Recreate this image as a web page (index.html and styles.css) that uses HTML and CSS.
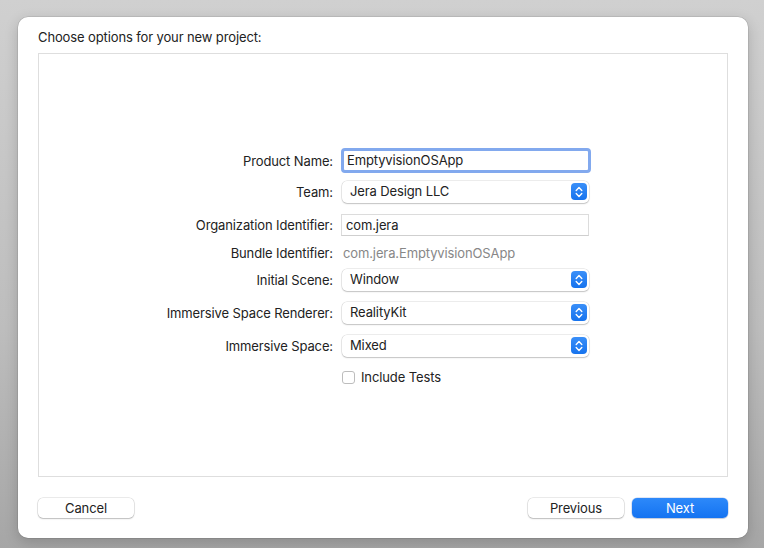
FILE: index.html
```html
<!DOCTYPE html>
<html lang="en">
<head>
    <meta charset="UTF-8">
    <title>New Project</title>
    <link rel="stylesheet" href="styles.css">
</head>
<body>

    <!-- Okno dialogu -->
    <div class="sheet">
        <div class="sheet-title">Choose options for your new project:</div>

        <div class="panel">
            <div class="form">
                <div class="row row-first">
                    <label class="label">Product Name:</label>
                    <div class="field field-focus">EmptyvisionOSApp</div>
                </div>
                <div class="row row-team">
                    <label class="label">Team:</label>
                    <div class="popup-btn">Jera Design LLC<span class="stepper"><svg width="8" height="12" viewBox="0 0 8 12"><path d="M1.2 4.4 L4 1.6 L6.8 4.4 M1.2 7.6 L4 10.4 L6.8 7.6" fill="none" stroke="#fff" stroke-width="1.4" stroke-linecap="round" stroke-linejoin="round"/></svg></span></div>
                </div>
                <div class="row">
                    <label class="label">Organization Identifier:</label>
                    <div class="field">com.jera</div>
                </div>
                <div class="row row-bundle">
                    <label class="label">Bundle Identifier:</label>
                    <div class="value">com.jera.EmptyvisionOSApp</div>
                </div>
                <div class="row row-scene">
                    <label class="label">Initial Scene:</label>
                    <div class="popup-btn">Window<span class="stepper"><svg width="8" height="12" viewBox="0 0 8 12"><path d="M1.2 4.4 L4 1.6 L6.8 4.4 M1.2 7.6 L4 10.4 L6.8 7.6" fill="none" stroke="#fff" stroke-width="1.4" stroke-linecap="round" stroke-linejoin="round"/></svg></span></div>
                </div>
                <div class="row">
                    <label class="label">Immersive Space Renderer:</label>
                    <div class="popup-btn">RealityKit<span class="stepper"><svg width="8" height="12" viewBox="0 0 8 12"><path d="M1.2 4.4 L4 1.6 L6.8 4.4 M1.2 7.6 L4 10.4 L6.8 7.6" fill="none" stroke="#fff" stroke-width="1.4" stroke-linecap="round" stroke-linejoin="round"/></svg></span></div>
                </div>
                <div class="row">
                    <label class="label">Immersive Space:</label>
                    <div class="popup-btn">Mixed<span class="stepper"><svg width="8" height="12" viewBox="0 0 8 12"><path d="M1.2 4.4 L4 1.6 L6.8 4.4 M1.2 7.6 L4 10.4 L6.8 7.6" fill="none" stroke="#fff" stroke-width="1.4" stroke-linecap="round" stroke-linejoin="round"/></svg></span></div>
                </div>
                <div class="row row-check">
                    <span class="label"></span>
                    <div class="check"><span class="check-box"></span>Include Tests</div>
                </div>
            </div>
        </div>

        <!-- Przyciski -->
        <div class="buttons">
            <button class="btn">Cancel</button>
            <div class="buttons-right">
                <button class="btn">Previous</button>
                <button class="btn btn-primary">Next</button>
            </div>
        </div>
    </div>

</body>
</html>
```

FILE: styles.css
```css
 body {
     margin: 0;
     height: 548px;
     overflow: hidden;
     background: linear-gradient(to bottom, #d0d0d0 0%, #bdbdbd 60%, #a6a6a6 100%);
     font-family: Inter, "Liberation Sans", sans-serif;
     font-size: 13px;
     letter-spacing: -0.12px;
     color: #222;
     padding: 17px 0 0 18px;
     box-sizing: border-box;
 }

 /* Okno dialogu */
 .sheet {
     width: 730px;
     height: 521px;
     box-sizing: border-box;
     background: #fff;
     border-radius: 10px;
     padding: 12px 20px 0 20px;
     box-shadow: 0 0 0 0.5px rgba(0, 0, 0, 0.15), 0 4px 14px rgba(0, 0, 0, 0.18);
 }

 .sheet-title {
     line-height: 16px;
     height: 16px;
     margin-bottom: 8px;
 }

 .panel {
     height: 424px;
     box-sizing: border-box;
     border: 1px solid #dedede;
     padding-top: 94px;
 }

 .form {
     display: flex;
     flex-direction: column;
 }

 .row {
     display: flex;
     align-items: center;
     height: 22px;
     margin-top: 11px;
 }

 .row-first {
     height: 25px;
     margin-top: 0;
 }

 .row-team {
     margin-top: 8px;
 }

 .row-bundle {
     margin-top: 6px;
 }

 .row-scene {
     margin-top: 5px;
 }

 .row-check {
     height: 18px;
 }

 .label {
     width: 294px;
     text-align: right;
     margin-right: 8px;
     flex-shrink: 0;
 }

 /* Pola tekstowe */
 .field {
     width: 248px;
     height: 22px;
     box-sizing: border-box;
     border: 1px solid #dcdcdc;
     border-bottom-color: #cfcfcf;
     padding: 0 4px;
     line-height: 20px;
     background: #fff;
 }

 .field-focus {
     width: 250px;
     height: 25px;
     border: 3px solid #82a9ee;
     border-radius: 4px;
     padding: 0 3px;
     line-height: 19px;
 }

 .value {
     color: #878787;
     padding-left: 2px;
 }

 /* Listy rozwijane */
 .popup-btn {
     position: relative;
     width: 247px;
     height: 22px;
     box-sizing: border-box;
     border-radius: 5px;
     padding-left: 8px;
     line-height: 21px;
     background: #fff;
     box-shadow: 0 0 0 0.5px rgba(0, 0, 0, 0.14), 0 1px 1.5px rgba(0, 0, 0, 0.18);
     margin-left: 1px;
 }

 .stepper {
     position: absolute;
     right: 2px;
     top: 2px;
     width: 16px;
     height: 17px;
     border-radius: 4px;
     background: linear-gradient(to bottom, #3a8ff8, #1673ee);
     display: flex;
     align-items: center;
     justify-content: center;
 }

 /* Pole wyboru */
 .check {
     display: flex;
     align-items: center;
     margin-left: 1px;
 }

 .check-box {
     width: 13px;
     height: 13px;
     box-sizing: border-box;
     border: 1px solid #bdbdbd;
     border-radius: 3px;
     margin-right: 6px;
     background: #fff;
 }

 /* Przyciski */
 .buttons {
     display: flex;
     justify-content: space-between;
     margin-top: 21px;
 }

 .buttons-right {
     display: flex;
     gap: 8px;
 }

 .btn {
     width: 96px;
     height: 20px;
     border: none;
     border-radius: 5px;
     background: #fff;
     font-family: Inter, "Liberation Sans", sans-serif;
     font-size: 13px;
     letter-spacing: -0.12px;
     color: #222;
     padding: 0 0 1px 0;
     box-shadow: 0 0 0 0.5px rgba(0, 0, 0, 0.16), 0 1px 1.5px rgba(0, 0, 0, 0.2);
 }

 .btn-primary {
     color: #fff;
     background: linear-gradient(to bottom, #2d89fa, #1473f1);
     box-shadow: 0 0 0 0.5px rgba(0, 60, 180, 0.25), 0 1px 1px rgba(0, 0, 0, 0.12);
 }
```
